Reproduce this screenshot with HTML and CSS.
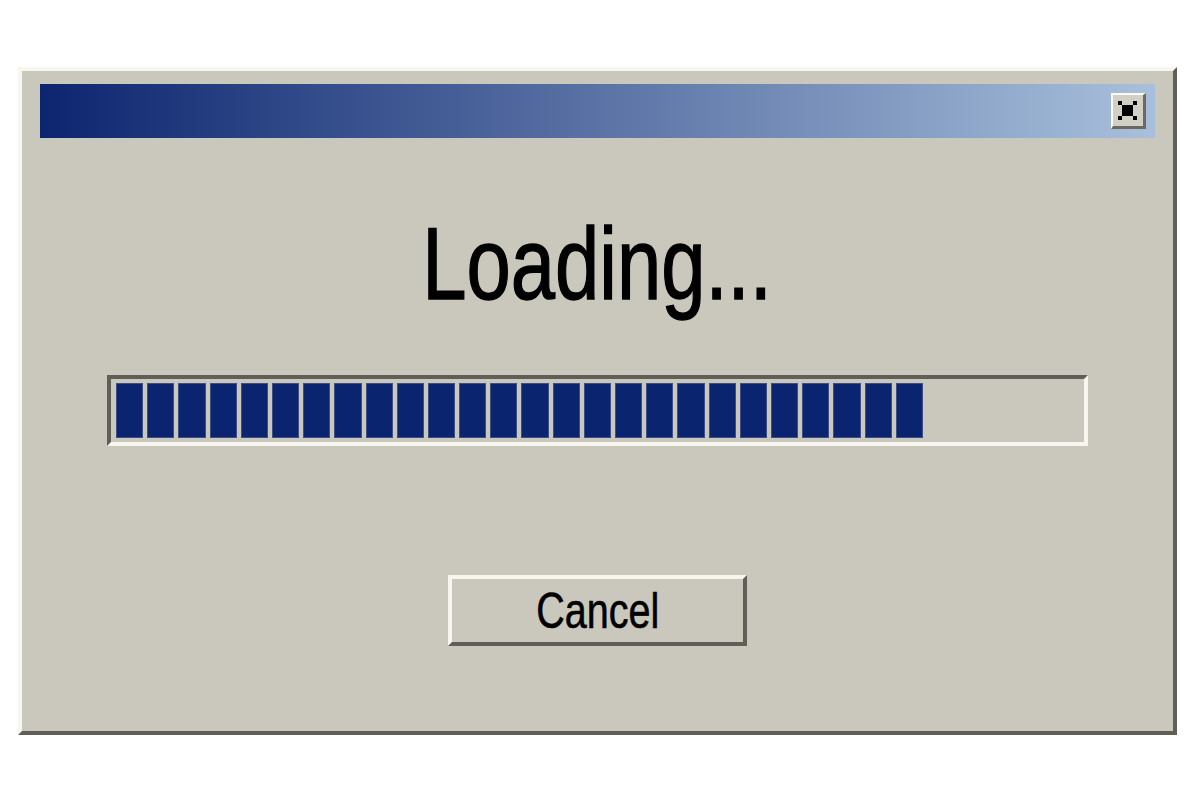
FILE: index.html
```html
<!DOCTYPE html>
<html lang="en">
<head>
<meta charset="utf-8">
<title>Loading</title>
<link rel="stylesheet" href="styles.css">
</head>
<body>
  <div class="window">
    <div class="titlebar">
      <button class="close" aria-label="Close">
        <svg viewBox="0 0 19 19" width="19" height="19" aria-hidden="true">
          <rect x="0" y="0" width="4" height="4"/>
          <rect x="15" y="0" width="4" height="4"/>
          <rect x="0" y="15" width="4" height="4"/>
          <rect x="15" y="15" width="4" height="4"/>
          <rect x="4" y="4" width="11" height="11"/>
        </svg>
      </button>
    </div>
    <div class="content">
      <h1 class="heading"><span class="squeeze">Loading...</span></h1>
      <div class="progress">
        <span class="block"></span><span class="block"></span><span class="block"></span><span class="block"></span>
        <span class="block"></span><span class="block"></span><span class="block"></span><span class="block"></span>
        <span class="block"></span><span class="block"></span><span class="block"></span><span class="block"></span>
        <span class="block"></span><span class="block"></span><span class="block"></span><span class="block"></span>
        <span class="block"></span><span class="block"></span><span class="block"></span><span class="block"></span>
        <span class="block"></span><span class="block"></span><span class="block"></span><span class="block"></span>
        <span class="block"></span><span class="block"></span>
      </div>
      <button class="cancel"><span class="squeeze">Cancel</span></button>
    </div>
  </div>
</body>
</html>
```
FILE: styles.css
```css
html, body {
  margin: 0;
  padding: 0;
  background: #ffffff;
}

body {
  width: 1200px;
  height: 800px;
  padding: 67px 0 0 18px;
  box-sizing: border-box;
  font-family: "Liberation Sans", Arial, sans-serif;
}

/* Dialog frame with a raised 3D edge */
.window {
  box-sizing: border-box;
  width: 1159px;
  height: 668px;
  border: 4px solid;
  border-color: #f8f7ef #5f5f57 #5f5f57 #f8f7ef;
  background: #cac8bc;
  padding: 13px 18px 0 18px;
}

.titlebar {
  height: 54px;
  background: linear-gradient(to right, #0c256f 0%, #a8c0db 100%);
  display: flex;
  align-items: center;
  justify-content: flex-end;
  padding-right: 9px;
}

.close {
  box-sizing: border-box;
  width: 35px;
  height: 36px;
  padding: 0;
  margin: 0;
  background: #d2cfc5;
  border-style: solid;
  border-width: 2px 3px 3px 2px;
  border-color: #fbfaf3 #6b6a62 #6b6a62 #fbfaf3;
  display: flex;
  align-items: center;
  justify-content: center;
}

.close svg {
  display: block;
  fill: #000000;
  shape-rendering: crispEdges;
  margin: 0 1px 0 0;
}

.content {
  display: flex;
  flex-direction: column;
  align-items: center;
}

.heading {
  margin: 75px 0 0 0;
  font-weight: normal;
  font-size: 102px;
  line-height: 102px;
  height: 102px;
  color: #000000;
  text-align: center;
  -webkit-text-stroke: 1.4px #000000;
}

.squeeze {
  display: inline-block;
  transform: scaleX(0.78);
}

/* Sunken progress track holding the segment blocks */
.progress {
  box-sizing: border-box;
  width: 981px;
  height: 71px;
  margin-top: 60px;
  border: 4px solid;
  border-color: #5f5f57 #f8f7ef #f8f7ef #5f5f57;
  padding: 4px 4px 4px 5px;
  display: flex;
  gap: 4px;
}

.block {
  box-sizing: border-box;
  width: 27.2px;
  height: 55px;
  flex: none;
  background: #0b2470;
  border: 1px solid #3d4f86;
}

.cancel {
  box-sizing: border-box;
  width: 299px;
  height: 71px;
  margin-top: 129px;
  padding: 0;
  background: #cac8bc;
  border: 4px solid;
  border-color: #f8f7ef #5f5f57 #5f5f57 #f8f7ef;
  font-family: "Liberation Sans", Arial, sans-serif;
  font-size: 50px;
  line-height: 50px;
  color: #000000;
  -webkit-text-stroke: 0.6px #000000;
  display: flex;
  align-items: center;
  justify-content: center;
}

.cancel .squeeze {
  transform: scaleX(0.79);
}
```
